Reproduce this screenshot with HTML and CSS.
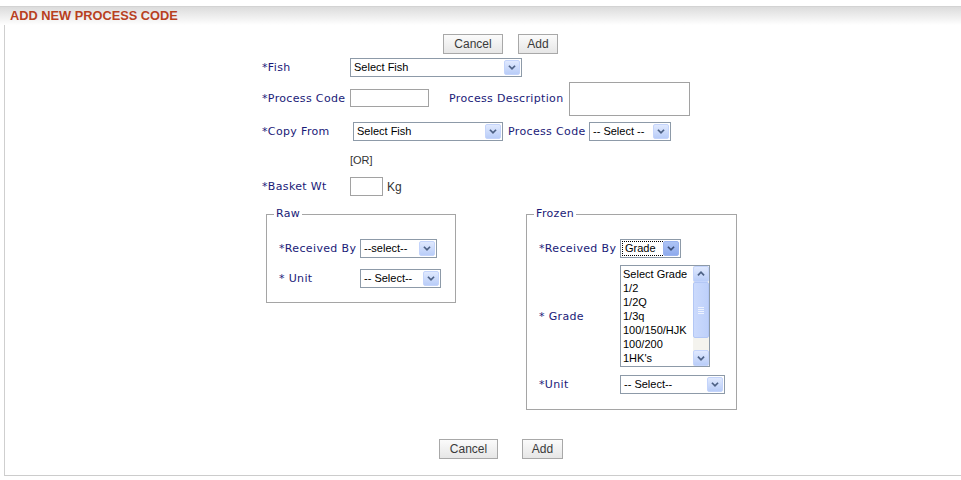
FILE: index.html
```html
<!DOCTYPE html>
<html>
<head>
<meta charset="utf-8">
<link rel="stylesheet" href="styles.css">
</head>
<body>
<div class="header"><span class="title">ADD NEW PROCESS CODE</span></div>
<div class="panel">
  <div class="form">
    <div class="btnrow top">
      <span class="btn w60">Cancel</span>
      <span class="btn w40">Add</span>
    </div>

    <div class="row r-fish">
      <span class="lbl w88">*Fish</span>
      <span class="sel w172"><span class="txt">Select Fish</span><span class="arr"><svg viewBox="0 0 16 16" width="16" height="15"><polyline points="4.5,6 8,9.5 11.5,6" fill="none" stroke="#4d6185" stroke-width="2"/></svg></span></span>
    </div>

    <div class="row r-pc">
      <span class="lbl w88">*Process Code</span>
      <span class="inp w79"></span>
      <span class="lbl desc">Process Description</span>
      <span class="area"></span>
    </div>

    <div class="row r-copy">
      <span class="lbl w91">*Copy From</span>
      <span class="sel w150"><span class="txt">Select Fish</span><span class="arr"><svg viewBox="0 0 16 16" width="16" height="15"><polyline points="4.5,6 8,9.5 11.5,6" fill="none" stroke="#4d6185" stroke-width="2"/></svg></span></span>
      <span class="lbl pcl">Process Code</span>
      <span class="sel w82"><span class="txt">-- Select --</span><span class="arr"><svg viewBox="0 0 16 16" width="16" height="15"><polyline points="4.5,6 8,9.5 11.5,6" fill="none" stroke="#4d6185" stroke-width="2"/></svg></span></span>
    </div>

    <div class="row r-or">
      <span class="or">[OR]</span>
    </div>

    <div class="row r-basket">
      <span class="lbl w88">*Basket Wt</span>
      <span class="inp w33 h19"></span>
      <span class="kg">Kg</span>
    </div>

    <div class="sets">
      <fieldset class="fs raw">
        <legend>Raw</legend>
        <div class="fs-in">
          <div class="frow first">
            <span class="lbl w81">*Received By</span>
            <span class="sel w77"><span class="txt">--select--</span><span class="arr"><svg viewBox="0 0 16 16" width="16" height="15"><polyline points="4.5,6 8,9.5 11.5,6" fill="none" stroke="#4d6185" stroke-width="2"/></svg></span></span>
          </div>
          <div class="frow second">
            <span class="lbl w81">* Unit</span>
            <span class="sel w81"><span class="txt">-- Select--</span><span class="arr"><svg viewBox="0 0 16 16" width="16" height="15"><polyline points="4.5,6 8,9.5 11.5,6" fill="none" stroke="#4d6185" stroke-width="2"/></svg></span></span>
          </div>
        </div>
      </fieldset>

      <fieldset class="fs frozen">
        <legend>Frozen</legend>
        <div class="fs-in">
          <div class="frow first">
            <span class="lbl w81">*Received By</span>
            <span class="sel w61 focus"><span class="txt"><span class="dot">Grade</span></span><span class="arr dark"><svg viewBox="0 0 16 16" width="16" height="15"><polyline points="4.5,6 8,9.5 11.5,6" fill="none" stroke="#3b4f78" stroke-width="2"/></svg></span></span>
          </div>
          <div class="frow grade">
            <span class="lbl w81">* Grade</span>
            <div class="list">
              <div class="items">
                <div>Select Grade</div>
                <div>1/2</div>
                <div>1/2Q</div>
                <div>1/3q</div>
                <div>100/150/HJK</div>
                <div>100/200</div>
                <div>1HK's</div>
              </div>
              <div class="sb">
                <span class="sbtn"><svg viewBox="0 0 16 16" width="16" height="16"><polyline points="4.5,9.5 8,6 11.5,9.5" fill="none" stroke="#4d6185" stroke-width="2"/></svg></span>
                <span class="thumb"><span class="grip"></span></span>
                <span class="track"></span>
                <span class="sbtn"><svg viewBox="0 0 16 16" width="16" height="16"><polyline points="4.5,6.5 8,10 11.5,6.5" fill="none" stroke="#4d6185" stroke-width="2"/></svg></span>
              </div>
            </div>
          </div>
          <div class="frow unit">
            <span class="lbl w81">*Unit</span>
            <span class="sel w105"><span class="txt">-- Select--</span><span class="arr"><svg viewBox="0 0 16 16" width="16" height="15"><polyline points="4.5,6 8,9.5 11.5,6" fill="none" stroke="#4d6185" stroke-width="2"/></svg></span></span>
          </div>
        </div>
      </fieldset>
    </div>

    <div class="btnrow bottom">
      <span class="btn w59">Cancel</span>
      <span class="btn w41">Add</span>
    </div>
  </div>
</div>
</body>
</html>
```

FILE: styles.css
```css
html, body {
  margin: 0;
  padding: 0;
  background: #fff;
}
body {
  font-family: "DejaVu Sans", Verdana, sans-serif;
  font-size: 11px;
  color: #1a1a78;
}
.header {
  margin-top: 6px;
  height: 18px;
  border-top: 1px solid #d3d3d3;
  background: linear-gradient(#dcdcdc, #f4f4f4 70%, #ffffff);
  padding-left: 10px;
}
.title {
  font-family: "Liberation Sans", Arial, sans-serif;
  font-weight: bold;
  font-size: 12.8px;
  line-height: 17px;
  color: #b8401e;
}
.panel {
  margin-left: 4px;
  padding-top: 9px;
  height: 441px;
  border-left: 1px solid #cfcfcf;
  border-bottom: 1px solid #cccccc;
}
.form {
  padding-left: 257px;
}
.btnrow {
  display: flex;
  height: 20px;
}
.btnrow.top {
  margin-left: 181px;
  gap: 15px;
}
.btnrow.bottom {
  margin-top: 29px;
  margin-left: 177px;
  gap: 24px;
}
.btn {
  box-sizing: border-box;
  height: 20px;
  border: 1px solid #a8a8a8;
  background: linear-gradient(#fbfbfb, #e6e6e6);
  font-family: "Liberation Sans", Arial, sans-serif;
  font-size: 12px;
  color: #3a3a3a;
  display: flex;
  align-items: center;
  justify-content: center;
  line-height: 1;
}
.w60 { width: 60px; }
.w40 { width: 40px; }
.w59 { width: 59px; }
.w41 { width: 41px; }

.row {
  display: flex;
  align-items: center;
}
.r-fish { margin-top: 4px; height: 19px; }
.r-pc { margin-top: 4px; height: 34px; }
.r-copy { margin-top: 7px; height: 19px; }
.r-or { margin-top: 10px; height: 18px; }
.r-basket { margin-top: 8px; height: 19px; }

.lbl {
  flex: none;
  white-space: nowrap;
  letter-spacing: 0.35px;
}
.w88 { width: 88px; }
.w91 { width: 91px; }
.w81 { width: 81px; }
.desc { width: 112px; margin-left: 20px; margin-right: 8px; }
.pcl { width: 77px; margin-left: 5px; margin-right: 4px; }

.sel {
  box-sizing: border-box;
  display: flex;
  align-items: center;
  height: 19px;
  border: 1px solid #8d9aa8;
  background: #fff;
  flex: none;
}
.sel .txt {
  flex: 1;
  padding-left: 3px;
  padding-bottom: 1px;
  font-family: "Liberation Sans", Arial, sans-serif;
  font-size: 11px;
  color: #000;
  white-space: nowrap;
  overflow: hidden;
}
.sel .arr {
  box-sizing: border-box;
  width: 16px;
  height: 15px;
  margin-right: 1px;
  border: 1px solid #c4d4fb;
  border-radius: 2px;
  background: linear-gradient(#e0e9fe, #b9cdf8);
  display: flex;
  align-items: center;
  justify-content: center;
}
.sel .arr svg { display: block; }
.sel .arr.dark {
  background: linear-gradient(#aec4f5, #8eaaed);
  border-color: #9ab3ef;
}
.focus .txt { padding-left: 1px; padding-bottom: 0; }
.dot {
  display: inline-block;
  border: 1px dotted #000;
  padding: 0 6px 0 2px;
  line-height: 13px;
  width: 33px;
}
.w172 { width: 172px; }
.w150 { width: 150px; }
.w82 { width: 82px; }
.w77 { width: 77px; }
.w61 { width: 61px; }
.w105 { width: 105px; }

.inp {
  box-sizing: border-box;
  display: block;
  height: 18px;
  border: 1px solid #a2a2a2;
  background: #fff;
  flex: none;
}
.w79 { width: 79px; }
.w33 { width: 33px; }
.h19 { height: 19px; }
.area {
  box-sizing: border-box;
  display: block;
  width: 121px;
  height: 34px;
  border: 1px solid #a2a2a2;
  margin-top: 1px;
}
.or {
  margin-left: 88px;
  font-family: "Liberation Sans", Arial, sans-serif;
  font-size: 11px;
  color: #333;
}
.kg {
  margin-left: 4px;
  font-family: "Liberation Sans", Arial, sans-serif;
  font-size: 12px;
  color: #333;
}

.sets {
  display: flex;
  align-items: flex-start;
  margin-top: 12px;
  margin-left: 4px;
}
.fs {
  margin: 0;
  padding: 0;
  border: 1px solid #a5a5a5;
  box-sizing: border-box;
  min-width: 0;
}
.fs legend {
  margin-left: 7px;
  padding: 0 2px;
  line-height: 12px;
  font-size: 11px;
  letter-spacing: 0.35px;
  color: #1a1a78;
}
.raw { width: 190px; }
.frozen { width: 211px; margin-left: 70px; }
.fs-in {
  padding-left: 12px;
}
.raw .fs-in { padding-bottom: 14px; }
.frozen .fs-in { padding-bottom: 15px; }
.frow {
  display: flex;
  align-items: center;
}
.frow.first { margin-top: 19px; height: 19px; }
.frow.second { margin-top: 11px; height: 19px; }
.frow.grade { margin-top: 7px; height: 102px; }
.frow.unit { margin-top: 8px; height: 19px; }

.list {
  box-sizing: border-box;
  width: 90px;
  height: 102px;
  border: 1px solid #8d9aa8;
  display: flex;
  background: #fff;
}
.items {
  flex: 1;
  padding-top: 1px;
  padding-left: 2px;
  font-family: "Liberation Sans", Arial, sans-serif;
  font-size: 11px;
  line-height: 14px;
  color: #000;
  white-space: nowrap;
  overflow: hidden;
}
.sb {
  width: 16px;
  display: flex;
  flex-direction: column;
  background: #f4f3ee;
}
.sbtn {
  box-sizing: border-box;
  width: 16px;
  height: 16px;
  border: 1px solid #c4d4fb;
  border-radius: 2px;
  background: linear-gradient(#e0e9fe, #b9cdf8);
  display: flex;
  align-items: center;
  justify-content: center;
}
.sbtn svg { display: block; }
.thumb {
  box-sizing: border-box;
  height: 56px;
  border: 1px solid #b3c7f5;
  border-radius: 2px;
  background: linear-gradient(90deg, #cbdafc, #bed0fa);
  display: flex;
  align-items: center;
  justify-content: center;
}
.grip {
  width: 6px;
  height: 7px;
  background: repeating-linear-gradient(#eef3fe 0 1px, transparent 1px 2px);
}
.track { flex: 1; }
```
